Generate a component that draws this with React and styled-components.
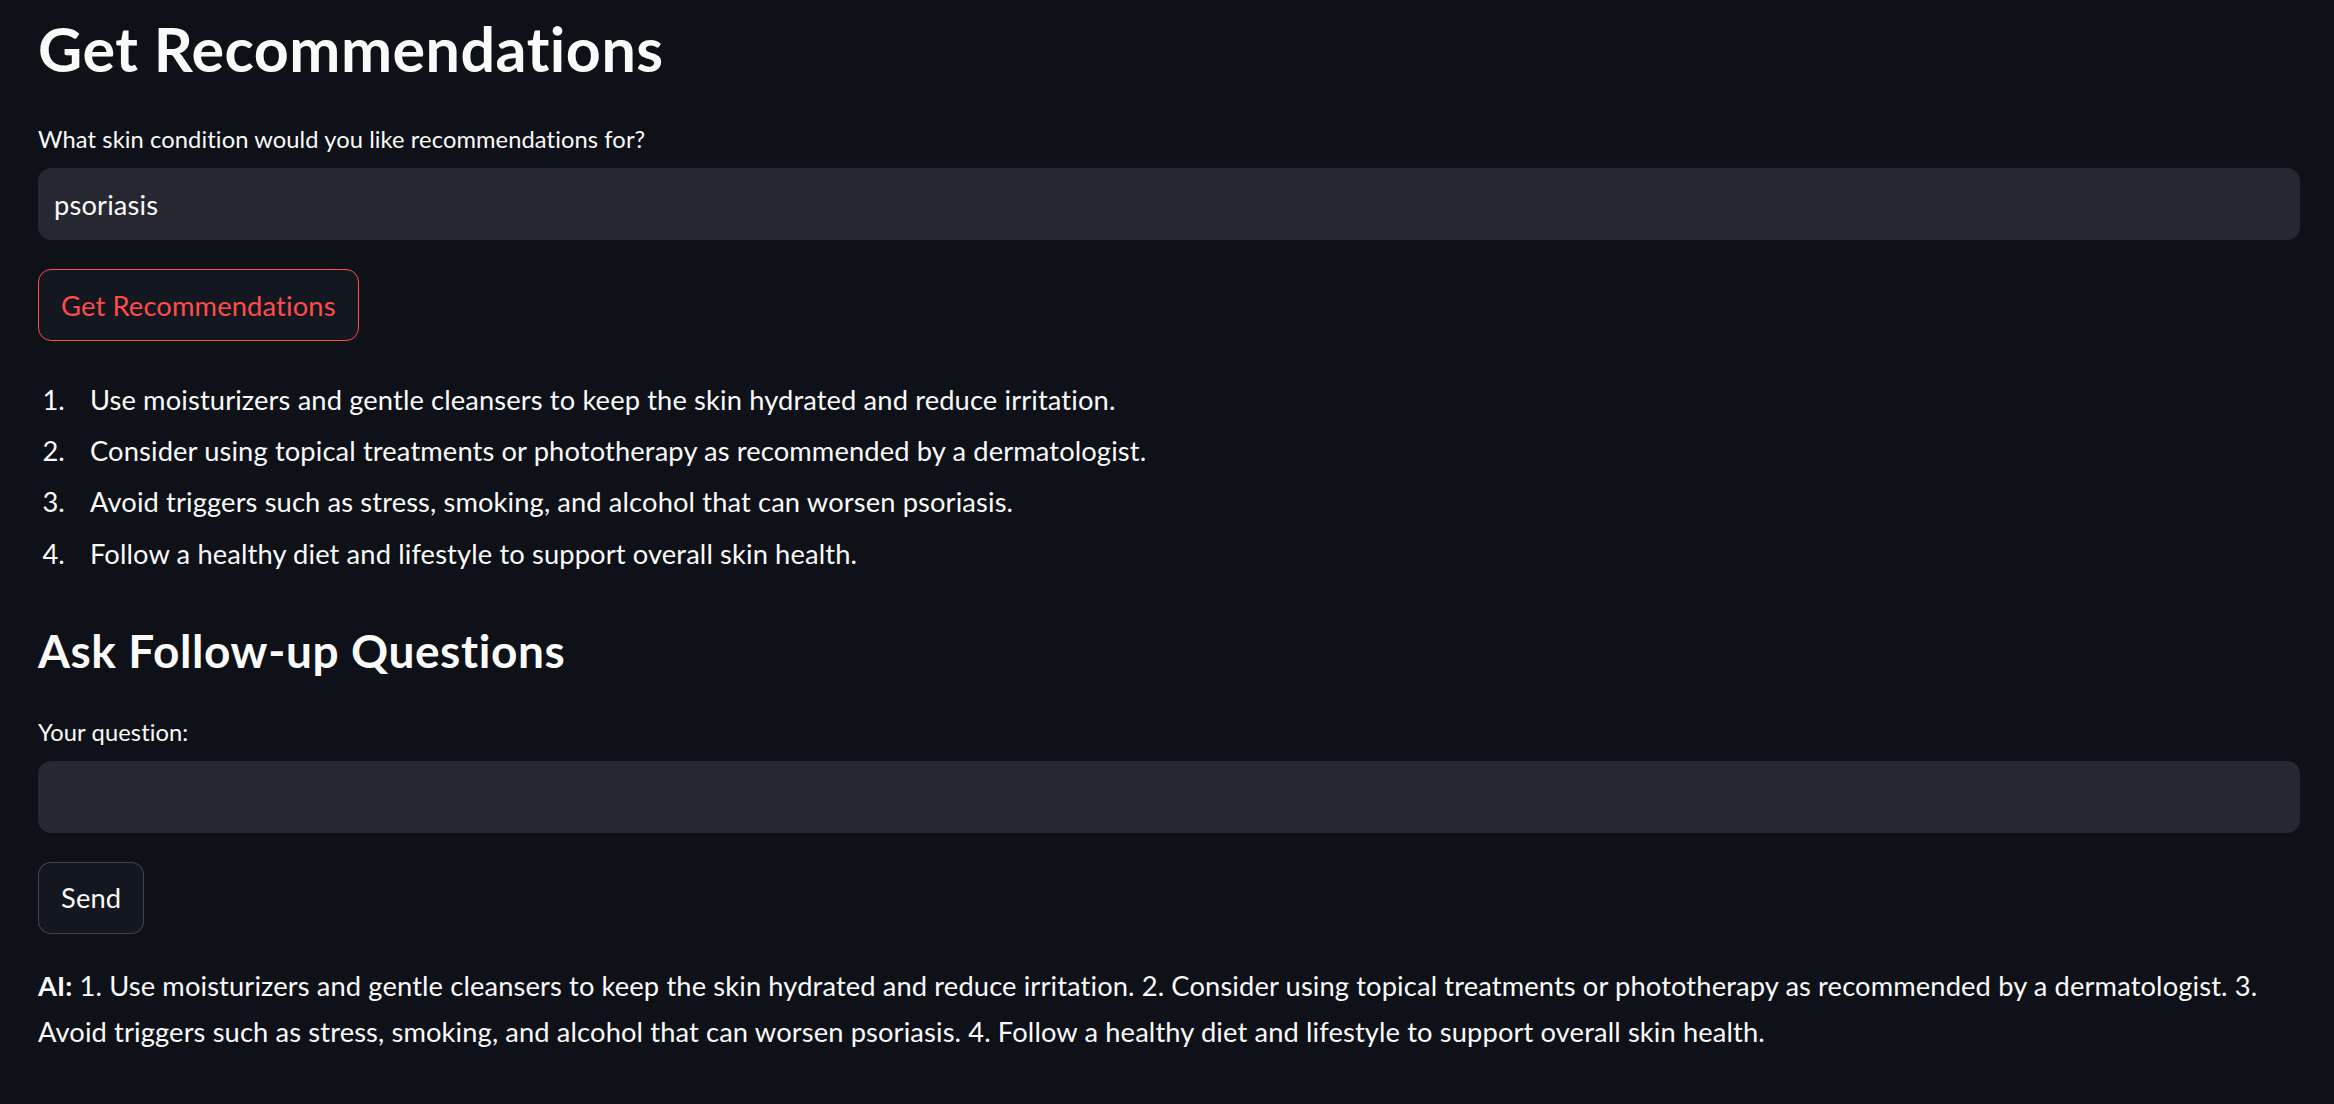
import React from 'react';
import styled, {createGlobalStyle} from 'styled-components';

const GlobalStyle = createGlobalStyle`
  html, body {
    margin: 0;
    padding: 0;
    background: #0e1117;
  }
  body {
    font-family: 'Lato', 'Liberation Sans', sans-serif;
    color: #fafafa;
  }
`;

const recommendations = [
  'Use moisturizers and gentle cleansers to keep the skin hydrated and reduce irritation.',
  'Consider using topical treatments or phototherapy as recommended by a dermatologist.',
  'Avoid triggers such as stress, smoking, and alcohol that can worsen psoriasis.',
  'Follow a healthy diet and lifestyle to support overall skin health.',
];

export default function App() {
  return (
    <>
      <GlobalStyle />
      <Main>
        <Title>Get Recommendations</Title>

        <Label>What skin condition would you like recommendations for?</Label>
        <TextInput type="text" defaultValue="psoriasis" />
        <Button $active>Get Recommendations</Button>

        <NumberedList>
          {recommendations.map((text) => (
            <Item key={text}>{text}</Item>
          ))}
        </NumberedList>

        <Subtitle>Ask Follow-up Questions</Subtitle>

        <Label>Your question:</Label>
        <TextInput type="text" defaultValue="" />
        <Button>Send</Button>

        <Answer>
          <strong>AI:</strong> 1. Use moisturizers and gentle cleansers to keep the skin hydrated and reduce
          irritation. 2. Consider using topical treatments or phototherapy as recommended by a dermatologist.
          3. Avoid triggers such as stress, smoking, and alcohol that can worsen psoriasis. 4. Follow a
          healthy diet and lifestyle to support overall skin health.
        </Answer>
      </Main>
    </>
  );
}

const Main = styled.main`
  display: flex;
  flex-direction: column;
  align-items: flex-start;
  padding: 0 34px 40px 38px;
`;

const Title = styled.h1`
  margin: 13px 0 0 0;
  font-size: 61px;
  line-height: 72px;
  font-weight: 700;
  letter-spacing: 0.5px;
  color: #fafafa;
`;

const Subtitle = styled.h2`
  margin: 49px 0 0 0;
  font-size: 46px;
  line-height: 54px;
  font-weight: 700;
  letter-spacing: 0.6px;
  color: #fafafa;
`;

const Label = styled.label`
  display: block;
  margin-top: 36px;
  font-size: 23.7px;
  line-height: 36px;
  letter-spacing: 0.1px;
  color: #fafafa;
`;

const TextInput = styled.input`
  box-sizing: border-box;
  width: 100%;
  height: 72px;
  margin-top: 11px;
  padding: 0 16px;
  border: none;
  outline: none;
  border-radius: 13px;
  background: #262730;
  color: #fafafa;
  font-family: inherit;
  font-size: 27.3px;
  letter-spacing: 0.15px;
`;

const Button = styled.button`
  box-sizing: border-box;
  height: 72px;
  margin-top: 29px;
  padding: 0 22px;
  border-radius: 13px;
  border: 1.5px solid ${(p) => (p.$active ? '#ff4b4b' : 'rgba(250, 250, 250, 0.2)')};
  background: rgb(19, 23, 32);
  color: ${(p) => (p.$active ? '#ff4b4b' : '#fafafa')};
  font-family: inherit;
  font-size: 27.3px;
  letter-spacing: 0.15px;
  cursor: pointer;
`;

const NumberedList = styled.ol`
  margin: 37px 0 0 0;
  padding: 0;
`;

const Item = styled.li`
  margin: 0 0 8px 34px;
  padding-left: 18px;
  font-size: 27.3px;
  line-height: 43.2px;
  letter-spacing: 0.12px;
  &:last-child {
    margin-bottom: 0;
  }
`;

const Answer = styled.p`
  margin: 29px 0 0 0;
  font-size: 27.3px;
  line-height: 46.5px;
  letter-spacing: 0.12px;
  strong {
    font-weight: 700;
  }
`;
